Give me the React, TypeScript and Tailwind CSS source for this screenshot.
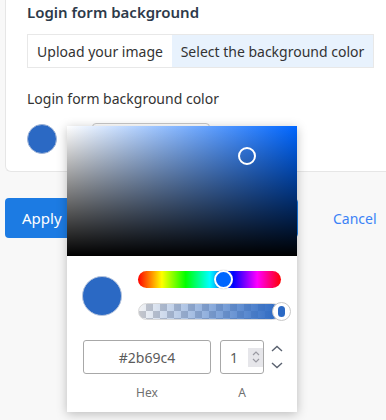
import React from "react";

const ColorPopover: React.FC = () => (
  <div className="absolute left-[67px] top-[126px] w-[230px] h-[286px] bg-white shadow-[0_2px_10px_rgba(0,0,0,0.25)]">
    <div className="relative h-[130px] bg-[linear-gradient(to_top,#000,transparent),linear-gradient(to_right,#fff,#0066ff)]">
      <span className="absolute left-[171px] top-[21px] w-[18px] h-[18px] rounded-full border-[2.5px] border-white" />
    </div>
    <div className="flex pl-[15px] pt-[15px]">
      <div className="mt-[5px] w-[40px] h-[40px] rounded-full bg-[#2b69c4] border border-[#b5c4dd]" />
      <div className="ml-[16px] flex flex-col gap-[15px]">
        <div className="relative w-[143px] h-[17px] rounded-full bg-[linear-gradient(to_right,#f00,#ff0,#0f0,#0ff,#00f,#f0f,#f00)]">
          <span className="absolute left-[76px] top-[-1px] w-[19px] h-[19px] rounded-full bg-[#0066ff] border-2 border-white shadow-[0_0_1px_rgba(0,0,0,0.4)]" />
        </div>
        <div className="relative w-[143px] h-[17px] rounded-full border border-[#d8d8d8] bg-[linear-gradient(to_right,rgba(43,105,196,0),#2b69c4),repeating-conic-gradient(#c4c6cc_0_25%,#f2f3f5_0_50%)] bg-[length:100%_100%,14px_14px]">
          <span className="absolute left-[133px] top-[-2px] w-[19px] h-[19px] rounded-full bg-white border border-[#c8c8c8] flex items-center justify-center">
            <span className="w-[7px] h-[11px] rounded-full bg-[#2b69c4]" />
          </span>
        </div>
      </div>
    </div>
    <div className="flex items-center pl-[16px] mt-[20px]">
      <div className="w-[128px] h-[34px] rounded-[3px] border border-[#a8a8a8] flex items-center justify-center text-[14px] text-[#5b5b5b]">
        #2b69c4
      </div>
      <div className="ml-[9px] w-[44px] h-[34px] rounded-[3px] border border-[#a8a8a8] flex items-center pl-[9px] text-[14px] text-[#5b5b5b]">
        <span>1</span>
        <span className="ml-[10px] w-[18px] h-[19px] bg-[#e6e6ea] flex items-center justify-center">
          <svg width="10" height="14" viewBox="0 0 10 14" fill="none" stroke="#9a9aa2" strokeWidth="1.2">
            <path d="M2 5 L5 2 L8 5" />
            <path d="M2 9 L5 12 L8 9" />
          </svg>
        </span>
      </div>
      <div className="ml-[6px]">
        <svg width="14" height="24" viewBox="0 0 14 24" fill="none" stroke="#5a6270" strokeWidth="1.4">
          <path d="M2 6 L7 1.5 L12 6" />
          <path d="M2 18 L7 22.5 L12 18" />
        </svg>
      </div>
    </div>
    <div className="flex pl-[16px] mt-[10px] text-[12px] text-[#707070]">
      <span className="w-[128px] text-center">Hex</span>
      <span className="ml-[9px] w-[44px] text-center">A</span>
    </div>
  </div>
);

export default function App() {
  return (
    <div className="relative w-[386px] h-[420px] overflow-hidden bg-[#f8f8f8] font-['Noto_Sans',sans-serif]">
      <div className="ml-[5px] bg-white border border-t-0 border-r-0 border-[#e6e6e6] rounded-bl-[6px] pl-[21px] pb-[16px]">
        <h2 className="text-[15px] font-semibold leading-[24px] text-[#2d3a4a]">
          Login form background
        </h2>
        <div className="mt-[10px] mr-[12px] flex h-[34px] border border-[#e8e8e8] text-[14px] text-[#333]">
          <div className="w-[144px] flex items-center justify-center bg-white">
            Upload your image
          </div>
          <div className="flex-1 flex items-center justify-center bg-[#e8f2fd]">
            Select the background color
          </div>
        </div>
        <p className="mt-[21px] text-[14px] leading-[20px] text-[#333]">
          Login form background color
        </p>
        <div className="mt-[15px] flex items-start">
          <div className="w-[30px] h-[30px] rounded-full bg-[#2b69c4] border border-[#9eb3d6]" />
          <div className="ml-[35px] -mt-[1px] w-[118px] h-[32px] rounded-[4px] border border-[#c8c8c8]" />
        </div>
      </div>
      <div className="mt-[26px] ml-[5px] flex items-center">
        <button className="h-[40px] w-[120px] rounded-[4px] bg-[#1c7be3] text-white text-[15px] text-left pl-[17px]">
          Apply
        </button>
        <button className="ml-[8px] h-[40px] w-[165px] rounded-[4px] border border-[#1c7be3] text-[#1c7be3] text-[15px]">
          Preview
        </button>
        <span className="ml-[35px] text-[14px] text-[#3b82f6]">Cancel</span>
      </div>
      <ColorPopover />
    </div>
  );
}
